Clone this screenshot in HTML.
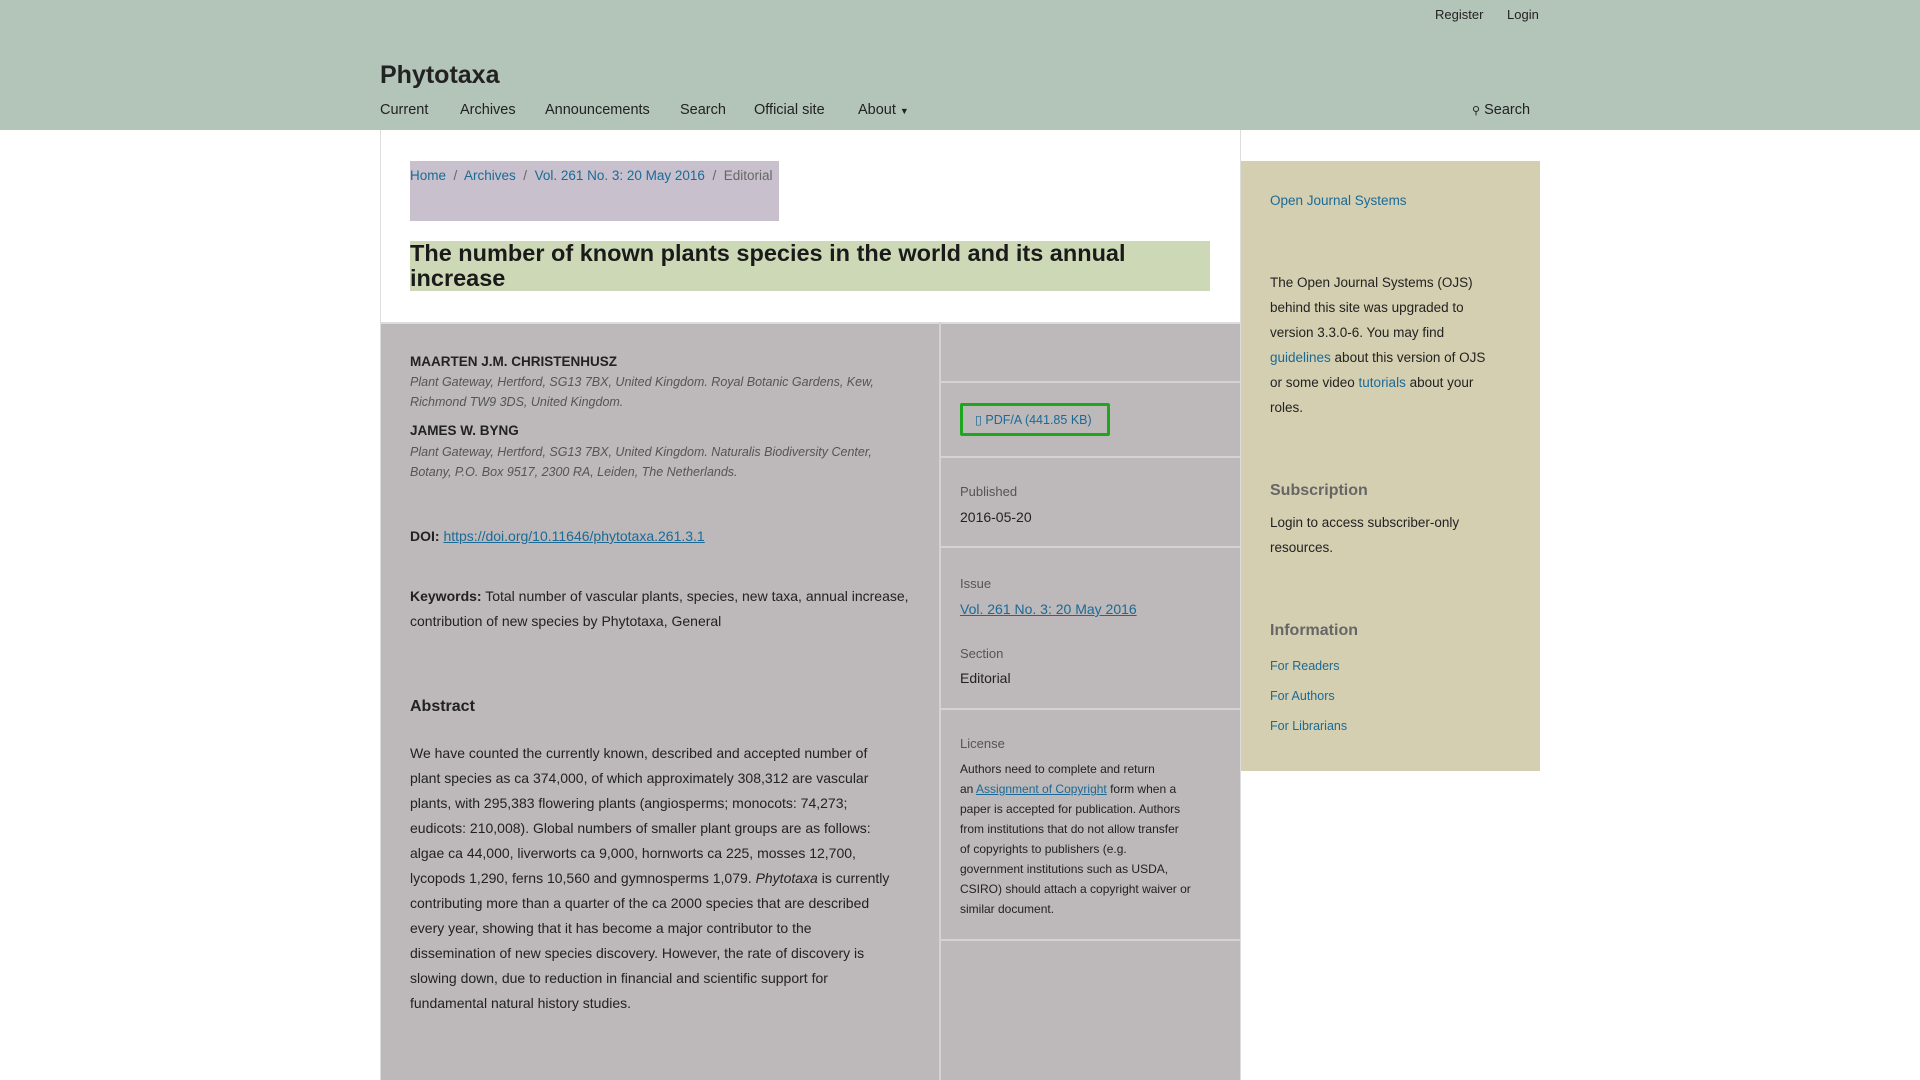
<!DOCTYPE html>
<html><head><meta charset="utf-8"><style>
*{margin:0;padding:0;box-sizing:border-box}
body{width:1920px;height:1080px;overflow:hidden;background:#fff;font-family:"Liberation Sans",sans-serif;color:#222;position:relative}
.a{position:absolute;white-space:nowrap}
a{color:#1b6a96;text-decoration:none}
.u{text-decoration:underline}
</style></head><body>
<div class="a" style="left:0;top:0;width:1920px;height:130px;background:#b3c4b8"></div>
<div class="a" style="left:1435px;top:6px;font-size:13px;line-height:18px;color:#222">Register</div>
<div class="a" style="left:1507px;top:6px;font-size:13px;line-height:18px;color:#222">Login</div>
<div class="a" style="left:380px;top:59px;font-size:25px;font-weight:bold;line-height:32px;color:#222">Phytotaxa</div>
<div class="a" style="top:100px;font-size:14.5px;line-height:20px;color:#222;left:380px">Current</div>
<div class="a" style="top:100px;font-size:14.5px;line-height:20px;color:#222;left:460px">Archives</div>
<div class="a" style="top:100px;font-size:14.5px;line-height:20px;color:#222;left:545px">Announcements</div>
<div class="a" style="top:100px;font-size:14.5px;line-height:20px;color:#222;left:680px">Search</div>
<div class="a" style="top:100px;font-size:14.5px;line-height:20px;color:#222;left:754px">Official site</div>
<div class="a" style="top:100px;font-size:14.5px;line-height:20px;color:#222;left:858px">About <span style="font-size:9px">▼</span></div>
<div class="a" style="top:100px;font-size:14.5px;line-height:20px;color:#222;left:1472px"><span style="font-size:11px">⚲</span> Search</div>

<div class="a" style="left:380px;top:130px;width:861px;height:950px;border-left:1px solid #ddd;border-right:1px solid #ddd;background:#fff"></div>
<div class="a" style="left:410px;top:161px;width:369px;height:60px;background:#c8c0cc"></div>
<div class="a" style="left:410px;top:167px;font-size:13.5px;line-height:18px;color:#666"><a>Home</a> &nbsp;/&nbsp; <a>Archives</a> &nbsp;/&nbsp; <a>Vol. 261 No. 3: 20 May 2016</a> &nbsp;/&nbsp; Editorial</div>
<div class="a" style="left:410px;top:241px;width:800px;height:50px;background:#cdd9b6"></div>
<div class="a" style="left:410px;top:241px;font-size:23.5px;font-weight:bold;line-height:25px;color:#1a1a1a">The number of known plants species in the world and its annual<br>increase</div>

<div class="a" style="left:381px;top:322px;width:859px;height:758px;background:#bdb8b9;border-top:2px solid #ddd"></div>
<div class="a" style="left:939px;top:322px;width:2px;height:758px;background:#d6d2d3"></div>
<div class="a" style="left:941px;top:381px;width:299px;height:2px;background:#d6d2d3"></div>
<div class="a" style="left:941px;top:456px;width:299px;height:2px;background:#d6d2d3"></div>
<div class="a" style="left:941px;top:546px;width:299px;height:2px;background:#d6d2d3"></div>
<div class="a" style="left:941px;top:708px;width:299px;height:2px;background:#d6d2d3"></div>
<div class="a" style="left:941px;top:939px;width:299px;height:2px;background:#d6d2d3"></div>

<div class="a" style="left:410px;top:352px;font-size:13.5px;font-weight:bold;line-height:20px">MAARTEN J.M. CHRISTENHUSZ</div>
<div class="a" style="left:410px;top:372px;font-size:12.5px;font-style:italic;line-height:20px;color:#555">Plant Gateway, Hertford, SG13 7BX, United Kingdom. Royal Botanic Gardens, Kew,<br>Richmond TW9 3DS, United Kingdom.</div>
<div class="a" style="left:410px;top:421px;font-size:13.5px;font-weight:bold;line-height:20px">JAMES W. BYNG</div>
<div class="a" style="left:410px;top:442px;font-size:12.5px;font-style:italic;line-height:20px;color:#555">Plant Gateway, Hertford, SG13 7BX, United Kingdom. Naturalis Biodiversity Center,<br>Botany, P.O. Box 9517, 2300 RA, Leiden, The Netherlands.</div>
<div class="a" style="left:410px;top:526px;font-size:14px;line-height:20px"><b>DOI:</b> <a class="u">https://doi.org/10.11646/phytotaxa.261.3.1</a></div>
<div class="a" style="left:410px;top:584px;font-size:14px;line-height:25px"><b>Keywords:</b> Total number of vascular plants, species, new taxa, annual increase,<br>contribution of new species by Phytotaxa, General</div>
<div class="a" style="left:410px;top:696px;font-size:16px;font-weight:bold;line-height:22px">Abstract</div>
<div class="a" style="left:410px;top:741px;font-size:14px;line-height:25px">We have counted the currently known, described and accepted number of<br>plant species as ca 374,000, of which approximately 308,312 are vascular<br>plants, with 295,383 flowering plants (angiosperms; monocots: 74,273;<br>eudicots: 210,008). Global numbers of smaller plant groups are as follows:<br>algae ca 44,000, liverworts ca 9,000, hornworts ca 225, mosses 12,700,<br>lycopods 1,290, ferns 10,560 and gymnosperms 1,079. <i>Phytotaxa</i> is currently<br>contributing more than a quarter of the ca 2000 species that are described<br>every year, showing that it has become a major contributor to the<br>dissemination of new species discovery. However, the rate of discovery is<br>slowing down, due to reduction in financial and scientific support for<br>fundamental natural history studies.</div>

<div class="a" style="left:960px;top:403px;width:150px;height:33px;border:3px solid #1ea61e;border-radius:2px"></div>
<div class="a" style="left:975px;top:410px;font-size:12.5px;line-height:20px;color:#1b6a96">▯ PDF/A (441.85 KB)</div>
<div class="a" style="left:960px;top:483px;font-size:13px;line-height:18px;color:#555">Published</div>
<div class="a" style="left:960px;top:507px;font-size:14px;line-height:20px">2016-05-20</div>
<div class="a" style="left:960px;top:575px;font-size:13px;line-height:18px;color:#555">Issue</div>
<div class="a" style="left:960px;top:599px;font-size:14px;line-height:20px"><a class="u">Vol. 261 No. 3: 20 May 2016</a></div>
<div class="a" style="left:960px;top:645px;font-size:13px;line-height:18px;color:#555">Section</div>
<div class="a" style="left:960px;top:668px;font-size:14px;line-height:20px">Editorial</div>
<div class="a" style="left:960px;top:735px;font-size:13px;line-height:18px;color:#555">License</div>
<div class="a" style="left:960px;top:759px;font-size:12px;line-height:20px">Authors need to complete and return<br>an <a class="u">Assignment of Copyright</a> form when a<br>paper is accepted for publication. Authors<br>from institutions that do not allow transfer<br>of copyrights to publishers (e.g.<br>government institutions such as USDA,<br>CSIRO) should attach a copyright waiver or<br>similar document.</div>

<div class="a" style="left:1241px;top:161px;width:299px;height:610px;background:#d4cfb0"></div>
<div class="a" style="left:1270px;top:191px;font-size:13.5px;line-height:20px"><a>Open Journal Systems</a></div>
<div class="a" style="left:1270px;top:270px;font-size:13.5px;line-height:25px">The Open Journal Systems (OJS)<br>behind this site was upgraded to<br>version 3.3.0-6. You may find<br><a>guidelines</a> about this version of OJS<br>or some video <a>tutorials</a> about your<br>roles.</div>
<div class="a" style="left:1270px;top:480px;font-size:16px;font-weight:bold;line-height:22px;color:#666">Subscription</div>
<div class="a" style="left:1270px;top:510px;font-size:13.5px;line-height:25px">Login to access subscriber-only<br>resources.</div>
<div class="a" style="left:1270px;top:620px;font-size:16px;font-weight:bold;line-height:22px;color:#666">Information</div>
<div class="a" style="left:1270px;top:657px;font-size:12.5px;line-height:18px"><a>For Readers</a></div>
<div class="a" style="left:1270px;top:687px;font-size:12.5px;line-height:18px"><a>For Authors</a></div>
<div class="a" style="left:1270px;top:717px;font-size:12.5px;line-height:18px"><a>For Librarians</a></div>
</body></html>
